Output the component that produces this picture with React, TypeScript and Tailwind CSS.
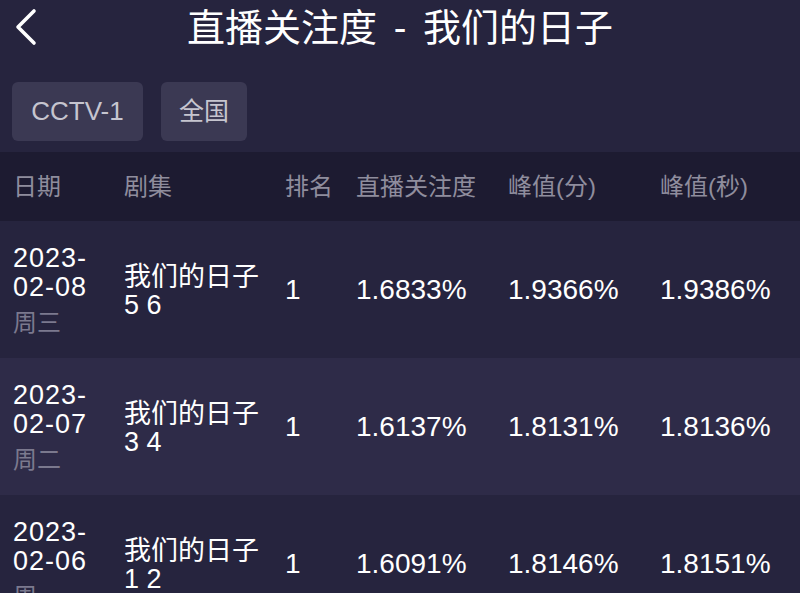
// Live-attention ranking page for a single drama: header, channel/region tags, data table.

type Row = {
  date: [string, string];
  weekday: string;
  episode: string;
  rank: string;
  live: string;
  peakMin: string;
  peakSec: string;
};

const rows: Row[] = [
  { date: ["2023-", "02-08"], weekday: "周三", episode: "5 6", rank: "1", live: "1.6833%", peakMin: "1.9366%", peakSec: "1.9386%" },
  { date: ["2023-", "02-07"], weekday: "周二", episode: "3 4", rank: "1", live: "1.6137%", peakMin: "1.8131%", peakSec: "1.8136%" },
  { date: ["2023-", "02-06"], weekday: "周一", episode: "1 2", rank: "1", live: "1.6091%", peakMin: "1.8146%", peakSec: "1.8151%" },
];

const cols = "grid grid-cols-[111px_161px_71px_152px_152px_1fr] pl-[13px]";
const font = { fontFamily: '"Liberation Sans", "Noto Sans CJK SC", sans-serif' };

export default function App() {
  return (
    <div className="h-[593px] w-[800px] overflow-hidden bg-[#26243e] text-white" style={font}>
      {/* Title bar */}
      <div className="relative flex h-[56px] items-center justify-center">
        <button type="button" className="absolute left-[12px] top-[7px] text-white">
          <svg width="28" height="40" viewBox="0 0 28 40" fill="none" stroke="currentColor" strokeWidth={3.6} strokeLinecap="round" strokeLinejoin="round">
            <path d="M22 4 6 20l16 16" />
          </svg>
        </button>
        <h1 className="text-[38px] font-normal leading-none [word-spacing:6px]">直播关注度 - 我们的日子</h1>
      </div>

      {/* Filter tags */}
      <div className="flex gap-[18px] px-[12px] pb-[11px] pt-[26px]">
        <span className="flex h-[59px] w-[131px] items-center justify-center rounded-[6px] bg-[#3b3953] text-[26px] text-[#c6c5cf]">
          CCTV-1
        </span>
        <span className="flex h-[59px] w-[86px] items-center justify-center rounded-[6px] bg-[#3b3953] text-[25px] text-[#c6c5cf]">
          全国
        </span>
      </div>

      {/* Table header */}
      <div className={`${cols} h-[69px] items-center bg-[#1d1b31] text-[24px] text-[#8f8d9d]`}>
        <span>日期</span>
        <span>剧集</span>
        <span>排名</span>
        <span>直播关注度</span>
        <span>峰值(分)</span>
        <span>峰值(秒)</span>
      </div>

      {/* Rows */}
      {rows.map((r, i) => (
        <div
          key={r.date[1]}
          className={`${cols} h-[137px] items-center ${i % 2 === 1 ? "bg-[#2e2b48]" : "bg-[#26243e]"}`}
        >
          <div className="pt-[2px]">
            <div className="text-[27px] leading-[29px] tracking-[1px]">{r.date[0]}</div>
            <div className="text-[27px] leading-[29px] tracking-[1px]">{r.date[1]}</div>
            <div className="mt-[6px] text-[24px] leading-[30px] text-[#7b798e]">{r.weekday}</div>
          </div>
          <div className="pt-[2px] text-[27px] leading-[28px]">
            <div>我们的日子</div>
            <div>{r.episode}</div>
          </div>
          <span className="text-[28px]">{r.rank}</span>
          <span className="text-[28px]">{r.live}</span>
          <span className="text-[28px]">{r.peakMin}</span>
          <span className="text-[28px]">{r.peakSec}</span>
        </div>
      ))}
    </div>
  );
}
